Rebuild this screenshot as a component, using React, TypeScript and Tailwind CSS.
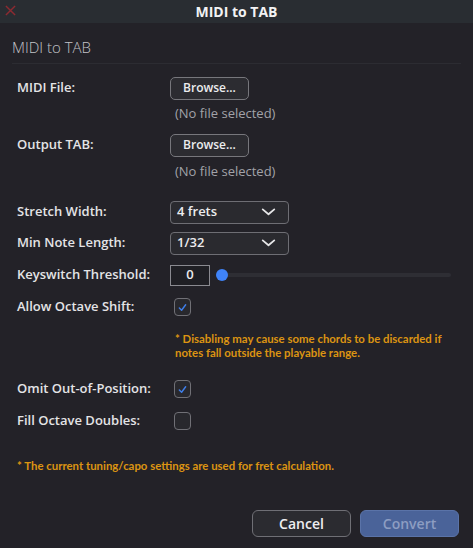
const font = { fontFamily: '"Open Sans", "Liberation Sans", sans-serif' };
const noteFont = { fontFamily: 'Lato, "Open Sans", sans-serif' };

function Label({ children }: { children: React.ReactNode }) {
  return <div className="w-[153px] shrink-0 text-[13px] font-semibold text-[#e4e4e6]">{children}</div>;
}

function Browse() {
  return (
    <button className="h-[23px] w-[79px] rounded-[5px] border border-[#77777c] bg-[#2c2c31] text-[12px] font-semibold text-[#ececee]">
      Browse...
    </button>
  );
}

function Chevron() {
  return (
    <svg viewBox="0 0 16 9" className="h-[8px] w-[15px]">
      <path d="M1.5 1.5 L8 7 L14.5 1.5" fill="none" stroke="#e6e6e8" strokeWidth="2" strokeLinecap="round" strokeLinejoin="round" />
    </svg>
  );
}

function Select({ value }: { value: string }) {
  return (
    <div className="flex h-[23px] w-[119px] items-center justify-between rounded-[4px] border border-[#6e6e74] bg-[#2a2a2f] pl-[6px] pr-[12px] text-[13px] font-semibold text-[#ececee]">
      <span>{value}</span>
      <Chevron />
    </div>
  );
}

function Check({ checked }: { checked: boolean }) {
  return (
    <div className="ml-[4px] flex h-[18px] w-[17px] items-center justify-center rounded-[4px] border border-[#707076] bg-[#28282d]">
      {checked && (
        <svg viewBox="0 0 10 10" className="h-[9px] w-[9px]">
          <path d="M1.5 5.5 L4 8 L8.5 2" fill="none" stroke="#3f7ee8" strokeWidth="1.6" strokeLinecap="round" strokeLinejoin="round" />
        </svg>
      )}
    </div>
  );
}

function Row({ label, className, children }: { label: string; className: string; children: React.ReactNode }) {
  return (
    <div className={`flex h-[24px] items-center ${className}`}>
      <Label>{label}</Label>
      {children}
    </div>
  );
}

export default function App() {
  return (
    <div className="h-[548px] w-[473px] overflow-hidden bg-[#232228]" style={font}>
      {/* title bar */}
      <div className="relative flex h-[23px] items-center justify-center bg-[#292d32]">
        <svg viewBox="0 0 12 12" className="absolute left-[5px] top-[5px] h-[11px] w-[11px]">
          <path d="M1 1 L11 11 M11 1 L1 11" stroke="#8c2a31" strokeWidth="1.6" />
        </svg>
        <span className="text-[14px] font-bold text-[#f2f2f4]">MIDI to TAB</span>
      </div>

      <div className="px-[12px]">
        <div className="h-[41px] border-b border-[#2c2c32] pt-[14px] text-[15px] font-light leading-[20px] text-[#c4c4c8]">
          MIDI to TAB
        </div>
      </div>

      <div className="px-[17px]">
        <Row label="MIDI File:" className="mt-[12px]">
          <Browse />
        </Row>
        <div className="ml-[158px] mt-[5px] h-[16px] text-[13px] leading-[16px] text-[#a2a2a8]">(No file selected)</div>

        <Row label="Output TAB:" className="mt-[12px]">
          <Browse />
        </Row>
        <div className="ml-[158px] mt-[6px] h-[16px] text-[13px] leading-[16px] text-[#a2a2a8]">(No file selected)</div>

        <Row label="Stretch Width:" className="mt-[21px]">
          <Select value="4 frets" />
        </Row>
        <Row label="Min Note Length:" className="mt-[7px]">
          <Select value="1/32" />
        </Row>
        <Row label="Keyswitch Threshold:" className="mt-[8px]">
          <div className="flex h-[21px] w-[40px] items-center justify-center border border-[#8a8a90] bg-[#1f1f24] text-[13px] font-semibold text-[#ececee]">
            0
          </div>
          <div className="relative ml-[6px] mr-[5px] flex h-[14px] flex-1 items-center">
            <div className="h-[4px] w-full rounded-full bg-[#2e2e34]" />
            <div className="absolute left-0 top-[1px] h-[12px] w-[12px] rounded-full bg-[#3f83f8]" />
          </div>
        </Row>
        <Row label="Allow Octave Shift:" className="mt-[8px]">
          <Check checked />
        </Row>
        <div
          className="ml-[158px] mt-[13px] whitespace-nowrap text-[11.4px] font-bold leading-[14px] text-[#dc9412]"
          style={noteFont}
        >
          * Disabling may cause some chords to be discarded if
          <br />
          notes fall outside the playable range.
        </div>

        <Row label="Omit Out-of-Position:" className="mt-[17px]">
          <Check checked />
        </Row>
        <Row label="Fill Octave Doubles:" className="mt-[8px]">
          <Check checked={false} />
        </Row>

        <div
          className="mt-[26px] whitespace-nowrap text-[11.4px] font-bold leading-[14px] text-[#dc9412]"
          style={noteFont}
        >
          * The current tuning/capo settings are used for fret calculation.
        </div>
      </div>

      <div className="mt-[37px] flex justify-end gap-[9px] pr-[14px]">
        <button className="h-[27px] w-[99px] rounded-[6px] border border-[#6f6f75] bg-[#2b2b30] text-[14px] font-semibold text-[#eeeef0]">
          Cancel
        </button>
        <button className="h-[27px] w-[99px] rounded-[6px] border border-[#5a73a8] bg-[#4a6399] text-[14px] font-semibold text-[#8d9dc2]">
          Convert
        </button>
      </div>
    </div>
  );
}
